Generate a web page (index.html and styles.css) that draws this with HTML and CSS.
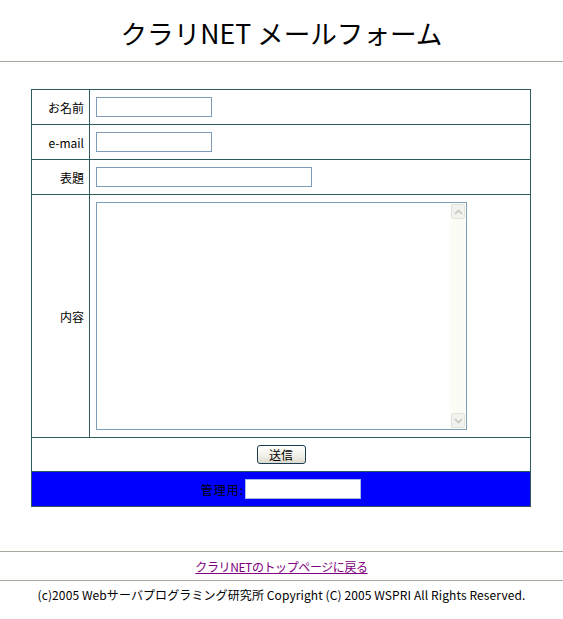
FILE: index.html
```html
<!DOCTYPE html>
<html lang="ja">
<head>
<meta charset="utf-8">
<title>クラリNET メールフォーム</title>
<link rel="stylesheet" href="styles.css">
</head>
<body>
<div class="header">
  <h1 class="title">クラリNET メールフォーム</h1>
</div>
<form class="mailform">
  <table class="formtable">
    <tr class="row">
      <th class="label">お名前</th>
      <td class="field"><input class="txt short" type="text"></td>
    </tr>
    <tr class="row">
      <th class="label">e-mail</th>
      <td class="field"><input class="txt short" type="text"></td>
    </tr>
    <tr class="row">
      <th class="label">表題</th>
      <td class="field"><input class="txt long" type="text"></td>
    </tr>
    <tr class="row-body">
      <th class="label">内容</th>
      <td class="field body-cell">
        <div class="ta-wrap">
          <textarea class="ta"></textarea>
          <div class="fake-scroll">
            <div class="sb-btn">
              <svg width="9" height="6" viewBox="0 0 9 6"><path d="M1 5 L4.5 1.5 L8 5" fill="none" stroke="#c4c8c0" stroke-width="1.6"/></svg>
            </div>
            <div class="sb-track"></div>
            <div class="sb-btn">
              <svg width="9" height="6" viewBox="0 0 9 6"><path d="M1 1 L4.5 4.5 L8 1" fill="none" stroke="#c4c8c0" stroke-width="1.6"/></svg>
            </div>
          </div>
        </div>
      </td>
    </tr>
    <tr class="row-submit">
      <td class="submit-cell" colspan="2"><button class="send" type="button">送信</button></td>
    </tr>
    <tr class="row-admin">
      <td class="admin-cell" colspan="2"><span class="admin-label">管理用:</span><input class="txt admin-input" type="text"></td>
    </tr>
  </table>
</form>
<div class="footer-link">
  <a class="toplink" href="#">クラリNETのトップページに戻る</a>
</div>
<div class="copyright">(c)2005 Webサーバプログラミング研究所 Copyright (C) 2005 WSPRI All Rights Reserved.</div>
</body>
</html>
```
FILE: styles.css
```css
html, body {
  margin: 0;
  padding: 0;
  background: #ffffff;
}
body {
  font-family: "Noto Sans CJK JP", "Noto Sans", sans-serif;
  font-size: 12px;
  color: #000;
}
.header {
  height: 61px;
  border-bottom: 1px solid #a8a89c;
  display: flex;
  align-items: center;
  justify-content: center;
}
.title {
  margin: 0;
  padding-top: 5px;
  font-family: "Noto Sans CJK JP", sans-serif;
  font-size: 26.6px;
  font-weight: normal;
  line-height: 30px;
  letter-spacing: 0;
}
.mailform {
  margin: 27px 0 0;
}
.formtable {
  width: 500px;
  margin: 0 0 0 31px;
  border-collapse: collapse;
  border: 1px solid #2f5c5c;
}
.formtable th, .formtable td {
  border: 1px solid #2f5c5c;
  padding: 0;
}
.label {
  width: 52px;
  text-align: right;
  font-weight: normal;
  padding-right: 5px !important;
  font-size: 12px;
}
.row {
  height: 35px;
}
.field {
  padding-left: 6px !important;
}
.txt {
  box-sizing: border-box;
  height: 20px;
  border: 1px solid #7f9db9;
  padding: 0 2px;
  margin: 0;
  background: #fff;
  display: block;
  font-family: inherit;
  font-size: 12px;
}
.short { width: 116px; }
.long { width: 216px; }
.row-body {
  height: 243px;
}
.body-cell {
  padding-top: 7px !important;
  padding-bottom: 6px !important;
  vertical-align: top;
}
.ta-wrap {
  position: relative;
  width: 371px;
  height: 228px;
}
.ta {
  box-sizing: border-box;
  width: 371px;
  height: 228px;
  border: 1px solid #7f9db9;
  margin: 0;
  padding: 2px;
  resize: none;
  overflow: hidden;
  display: block;
  font-family: inherit;
}
.fake-scroll {
  position: absolute;
  top: 1px;
  right: 1px;
  bottom: 1px;
  width: 16px;
  background: #fcfcf7;
  display: flex;
  flex-direction: column;
}
.sb-btn {
  height: 15px;
  margin: 1px;
  box-sizing: border-box;
  border: 1px solid #e2e4dc;
  border-radius: 2px;
  background: #f2f3ee;
  display: flex;
  align-items: center;
  justify-content: center;
}
.sb-track {
  flex: 1;
}
.row-submit {
  height: 34px;
}
.submit-cell {
  text-align: center;
}
.send {
  width: 49px;
  height: 19px;
  padding: 0;
  border: 1px solid #1c3c55;
  border-radius: 3px;
  background: linear-gradient(#ffffff, #f1efe6 60%, #dcd9cc);
  font-family: inherit;
  font-size: 12px;
  line-height: 15px;
  color: #000;
}
.row-admin {
  height: 35px;
}
.admin-cell {
  background: #0000ff;
  text-align: center;
}
.admin-label {
  display: inline-block;
  vertical-align: middle;
  color: #000;
  letter-spacing: 1px;
  margin-right: 1px;
}
.admin-input {
  display: inline-block;
  vertical-align: middle;
  width: 116px;
  border-color: #a8b8e8;
}
.footer-link {
  margin-top: 44px;
  border-top: 1px solid #a8a89c;
  border-bottom: 1px solid #a8a89c;
  height: 28px;
  display: flex;
  align-items: center;
  justify-content: center;
}
.toplink {
  color: #800080;
  text-decoration: underline;
  font-size: 12px;
  letter-spacing: -0.4px;
}
.copyright {
  text-align: center;
  padding-top: 5px;
  font-size: 12px;
  letter-spacing: 0.1px;
}
```
